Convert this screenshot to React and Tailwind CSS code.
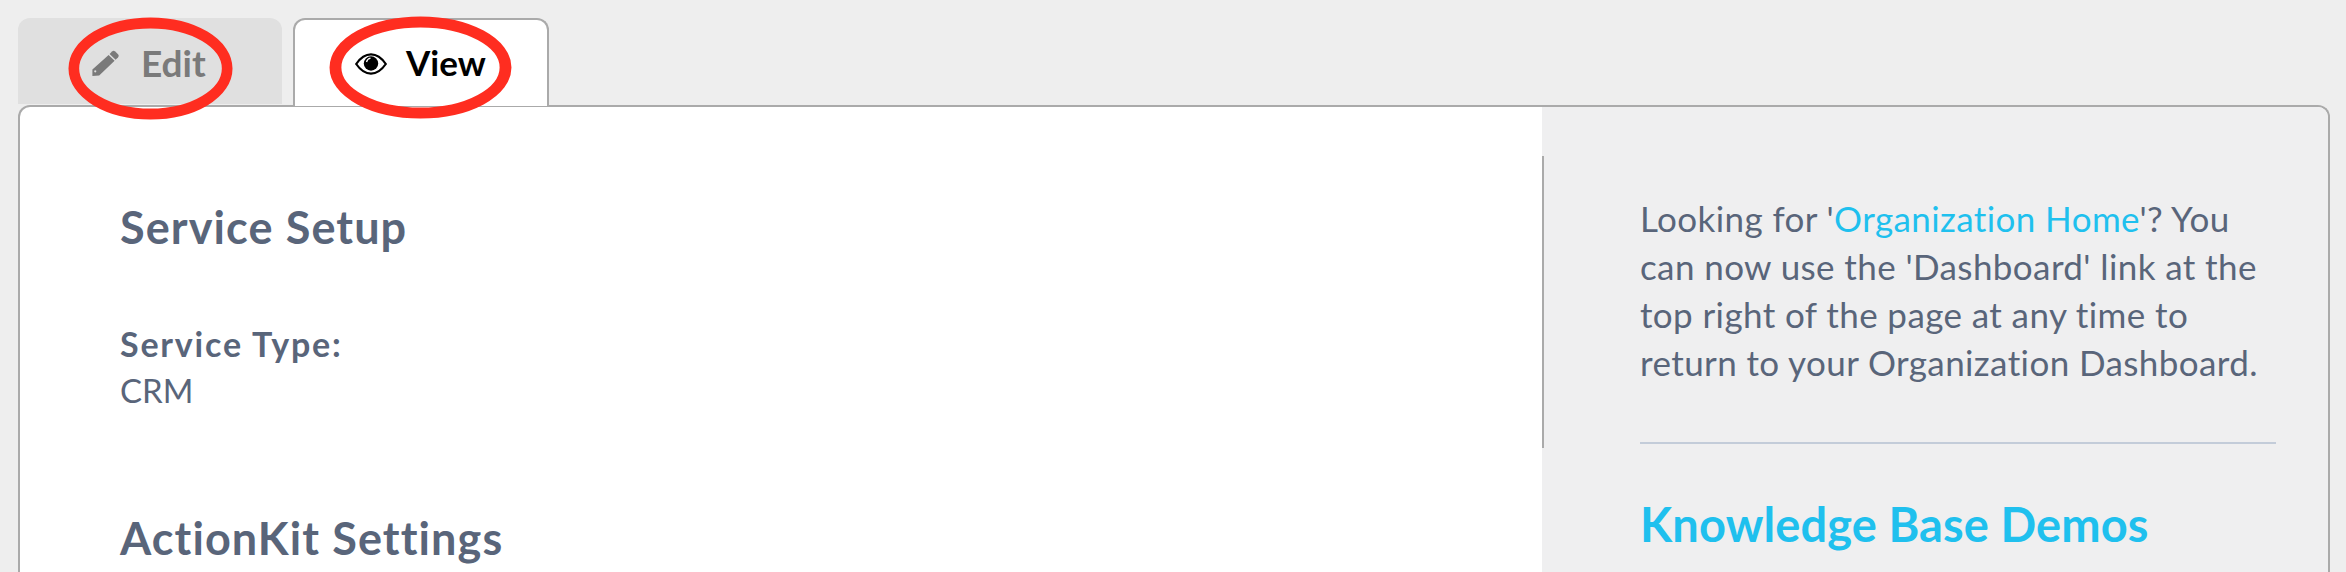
const Pencil = () => (
  <svg viewBox="0 0 27 26" className="w-[27px] h-[26px]" fill="#7a7a7a">
    <path d="M20 1.5 a2.4 2.4 0 0 1 3.2 0 L26 4.2 a2.4 2.4 0 0 1 0 3.2 L23.6 9.8 L17.6 3.9 Z" />
    <path d="M16.6 4.9 L22.6 10.8 L7.2 25.4 L0.4 26 L0.4 19.6 Z M3.2 20.2 a1.1 1.1 0 1 0 0.1 0 Z" fillRule="evenodd" />
  </svg>
);

const Eye = () => (
  <svg viewBox="0 0 32 22" className="w-[32px] h-[22px]">
    <path d="M1.2 11 C6 4 11 1.4 16 1.4 C21 1.4 26 4 30.8 11 C26 18 21 20.6 16 20.6 C11 20.6 6 18 1.2 11 Z" fill="white" stroke="black" strokeWidth="2.2" />
    <circle cx="16" cy="10.5" r="7.2" fill="black" />
    <path d="M11.5 9 C12 7 13.5 5.6 15.5 5.2" stroke="white" strokeWidth="1.3" fill="none" />
  </svg>
);

const Ring = ({ className }) => (
  <svg viewBox="0 0 170 104" className={`absolute z-20 pointer-events-none ${className}`} preserveAspectRatio="none">
    <ellipse cx="85" cy="52" rx="79" ry="46" fill="none" stroke="#ff2d20" strokeWidth="11" />
  </svg>
);

export default function App() {
  return (
    <div className="relative h-[572px] overflow-hidden bg-[#eeeeee] px-[18px] pt-[18px] font-['Lato',sans-serif] text-[#59657a]">
      {/* Tabs */}
      <div className="relative z-10 flex h-[88px] gap-[11px] -mb-[1px]">
        <div className="flex w-[264px] h-[86px] items-start gap-[22px] rounded-t-[12px] bg-[#e0e0e0] pl-[74px] pt-[32px] text-[37px] font-bold leading-[40px] text-[#7a7a7a]">
          <Pencil />
          <span className="-mt-[7px]">Edit</span>
        </div>
        <div className="flex w-[256px] h-[88px] items-start gap-[19px] rounded-t-[12px] border-2 border-b-0 border-[#aaaaaa] bg-white pl-[60px] pt-[33px] text-[35px] font-bold leading-[40px] text-black">
          <Eye />
          <span className="-mt-[11px]">View</span>
        </div>
      </div>

      {/* Panel */}
      <div className="flex h-[500px] w-[2312px] rounded-t-[12px] border-2 border-b-0 border-[#aaaaaa] overflow-hidden bg-white">
        <div className="w-[1522px] shrink-0 pl-[100px] pt-[96px]">
          <h2 className="text-[45px] font-bold tracking-[1.1px] leading-[48px]">Service Setup</h2>
          <div className="mt-[71px] text-[34px] font-bold tracking-[1.8px] leading-[44px]">Service Type:</div>
          <div className="text-[33px] leading-[48px]">CRM</div>
          <h2 className="mt-[100px] text-[45px] font-bold tracking-[1.1px] leading-[48px]">ActionKit Settings</h2>
        </div>
        <div className="flex flex-1 bg-[#efeff0]">
          <div className="mt-[49px] h-[292px] w-[2px] bg-[#aaaaaa]" />
          <div className="ml-[96px] w-[636px] pt-[87px]">
            <p className="text-[35px] font-normal tracking-[0.4px] leading-[48px]">
              Looking for '<span className="text-[#1fc0ee]">Organization Home</span>'? You can now use the 'Dashboard' link at the top right of the page at any time to return to your Organization Dashboard.
            </p>
            <div className="mt-[56px] h-[2px] bg-[#c3ccd9]" />
            <h2 className="mt-[54px] text-[47px] font-bold tracking-[0.1px] leading-[52px] text-[#1fc0ee]">Knowledge Base Demos</h2>
          </div>
        </div>
      </div>

      <Ring className="left-[68px] top-[17px] w-[165px] h-[103px]" />
      <Ring className="left-[329px] top-[16px] w-[183px] h-[103px]" />
    </div>
  );
}
